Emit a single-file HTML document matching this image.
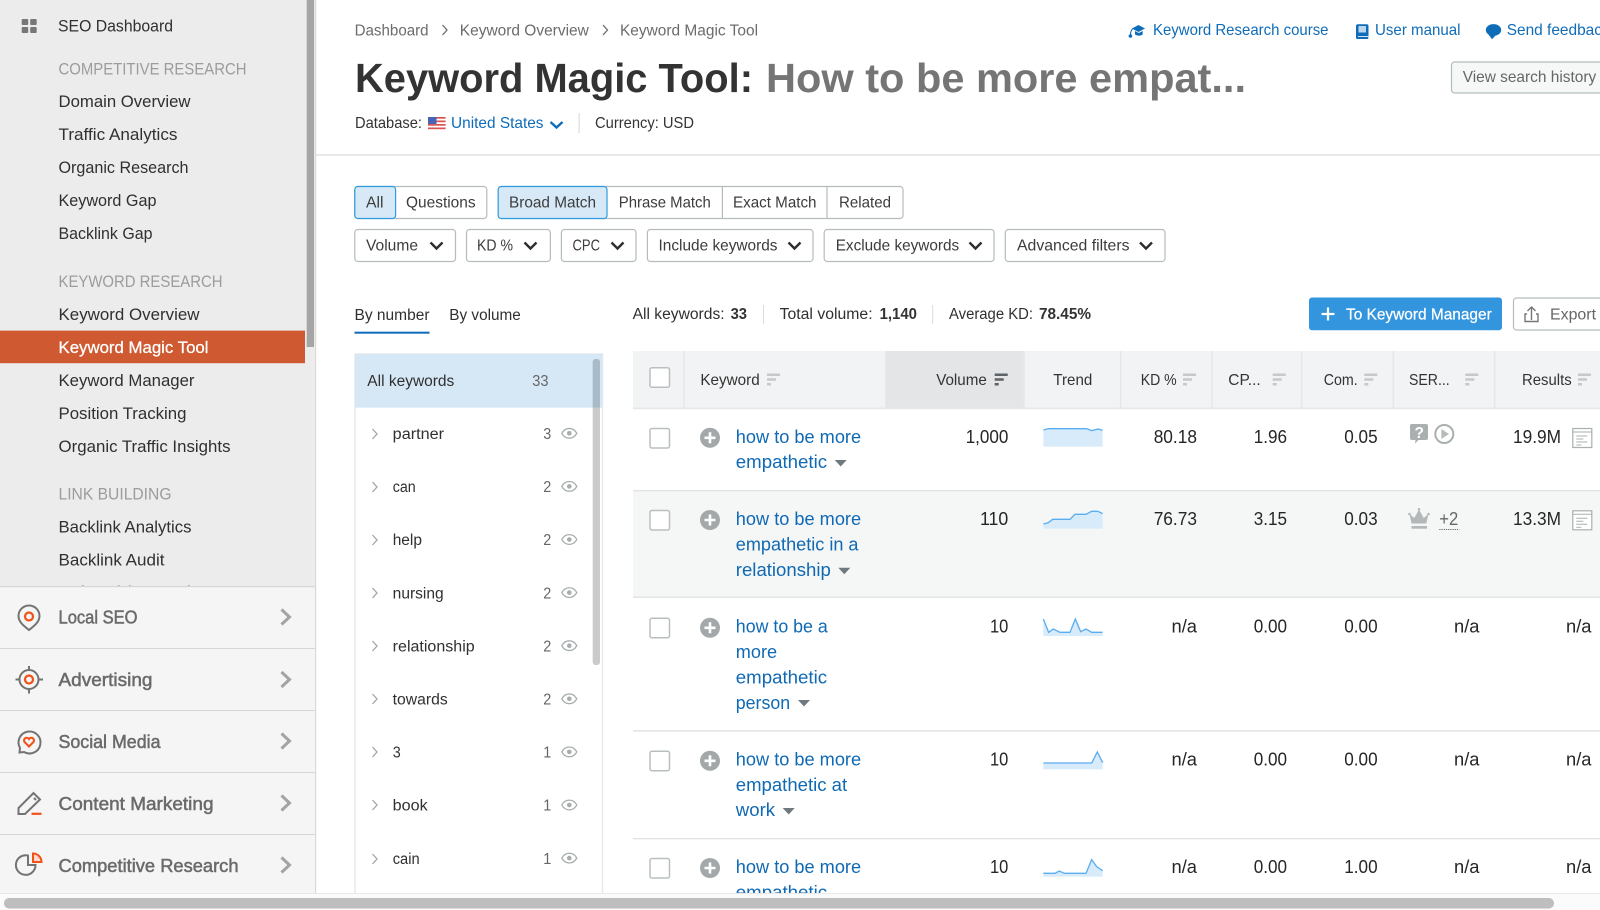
<!DOCTYPE html>
<html lang="en">
<head>
<meta charset="utf-8">
<title>Keyword Magic Tool</title>
<style>
html,body{margin:0;padding:0;background:#fff;width:1600px;height:910px;overflow:hidden}
svg{display:block;position:absolute;left:0;top:0}
text{font-family:"Liberation Sans",sans-serif;fill:#333;white-space:pre}
.n{font-size:16.5px;fill:#303030}
.h{font-size:16.5px;fill:#9c9c9c}
.m{font-size:18px;fill:#6a6a6a;stroke:#6a6a6a;stroke-width:.5px}
.b{font-size:15.5px;fill:#6c6c6c}
.f{font-size:16px;fill:#3c3c3c}
.l{font-size:16px;fill:#0f6cb8}
.k{font-size:18px;fill:#0f69b4}
.v{font-size:18px;fill:#262626}
.th{font-size:16px;fill:#333}
.g{font-size:15.5px;fill:#303030}
.c{font-size:15.5px;fill:#666}
.sb{font-size:15.5px;font-weight:bold;fill:#333}
.box{fill:#fff;stroke:#b4bcbc;stroke-width:1.2}
.cb{fill:#fff;stroke:#b9bfbf;stroke-width:1.5}
.chev{fill:none;stroke:#2e2e2e;stroke-width:2.4}
.side{fill:none;stroke:#a3a3a3;stroke-width:3}
.ic{fill:none;stroke:#737373;stroke-width:2}
.o{fill:none;stroke:#f0521a;stroke-width:2.2}
.sp{fill:#d8ebfb}
.sl{fill:none;stroke:#5aaef0;stroke-width:4}
</style>
</head>
<body>
<svg width="1600" height="910" viewBox="0 0 1600 910" xmlns="http://www.w3.org/2000/svg">
<rect width="1600" height="910" fill="#fff"/>

<!-- Sidebar -->
<rect x="0" y="0" width="315" height="587" fill="#ececec"/>
<rect x="306.700" y="0" width="7.300" height="347" fill="#a5a5a5"/>
<rect x="315" y="0" width="1.200" height="893" fill="#d9d9d9"/>
<g fill="#777">
<rect x="21.700" y="19" width="6.500" height="6" rx="1"/><rect x="30.200" y="19" width="6.500" height="6" rx="1"/>
<rect x="21.700" y="27" width="6.500" height="6" rx="1"/><rect x="30.200" y="27" width="6.500" height="6" rx="1"/>
</g>
<text class="n" x="58" y="31.300" textLength="115" lengthAdjust="spacingAndGlyphs">SEO Dashboard</text>
<text class="h" x="58.500" y="74.500" textLength="188" lengthAdjust="spacingAndGlyphs">COMPETITIVE RESEARCH</text>
<text class="n" x="58.500" y="107" textLength="132" lengthAdjust="spacingAndGlyphs">Domain Overview</text>
<text class="n" x="58.500" y="140" textLength="119" lengthAdjust="spacingAndGlyphs">Traffic Analytics</text>
<text class="n" x="58.500" y="173" textLength="130" lengthAdjust="spacingAndGlyphs">Organic Research</text>
<text class="n" x="58.500" y="206" textLength="98" lengthAdjust="spacingAndGlyphs">Keyword Gap</text>
<text class="n" x="58.500" y="239" textLength="94" lengthAdjust="spacingAndGlyphs">Backlink Gap</text>
<text class="h" x="58.500" y="287" textLength="164" lengthAdjust="spacingAndGlyphs">KEYWORD RESEARCH</text>
<text class="n" x="58.500" y="320" textLength="141" lengthAdjust="spacingAndGlyphs">Keyword Overview</text>
<rect x="0" y="330.600" width="305" height="32.600" fill="#cf5a32"/>
<text class="n" x="58.500" y="353" textLength="150" lengthAdjust="spacingAndGlyphs" style="fill:#fff;stroke:#fff;stroke-width:.25px">Keyword Magic Tool</text>
<text class="n" x="58.500" y="386" textLength="136" lengthAdjust="spacingAndGlyphs">Keyword Manager</text>
<text class="n" x="58.500" y="419" textLength="128" lengthAdjust="spacingAndGlyphs">Position Tracking</text>
<text class="n" x="58.500" y="452" textLength="172" lengthAdjust="spacingAndGlyphs">Organic Traffic Insights</text>
<text class="h" x="58.500" y="499.600" textLength="113" lengthAdjust="spacingAndGlyphs">LINK BUILDING</text>
<text class="n" x="58.500" y="532.500" textLength="133" lengthAdjust="spacingAndGlyphs">Backlink Analytics</text>
<text class="n" x="58.500" y="565.400" textLength="106" lengthAdjust="spacingAndGlyphs">Backlink Audit</text>
<g fill="#aaa"><rect x="82" y="585" width="1.500" height="1"/><rect x="118" y="585" width="1.500" height="1"/><rect x="129" y="585" width="1.500" height="1"/><rect x="188" y="585" width="1.500" height="1"/></g>

<!-- Sidebar bottom sections -->
<rect x="0" y="586" width="315" height="307" fill="#f5f5f5"/>
<g fill="#d3d7d7">
<rect x="0" y="586" width="315" height="1.200"/><rect x="0" y="648" width="315" height="1"/><rect x="0" y="710" width="315" height="1"/><rect x="0" y="772" width="315" height="1"/><rect x="0" y="834" width="315" height="1"/>
</g>
<text class="m" x="58.500" y="623.400" textLength="79" lengthAdjust="spacingAndGlyphs">Local SEO</text>
<text class="m" x="58.500" y="686" textLength="94" lengthAdjust="spacingAndGlyphs">Advertising</text>
<text class="m" x="58.500" y="748" textLength="102" lengthAdjust="spacingAndGlyphs">Social Media</text>
<text class="m" x="58.500" y="810" textLength="155" lengthAdjust="spacingAndGlyphs">Content Marketing</text>
<text class="m" x="58.500" y="872" textLength="180" lengthAdjust="spacingAndGlyphs">Competitive Research</text>
<path class="side" d="M281.500 609.500l8 7.500-8 7.500M281.500 672l8 7.500-8 7.500M281.500 733.500l8 7.500-8 7.500M281.500 795.500l8 7.500-8 7.500M281.500 857.500l8 7.500-8 7.500"/>
<!-- icons -->
<path class="ic" d="M29 630c-5-4-10.500-8-10.500-14a10.500 10.500 0 0 1 21 0c0 6-5.500 10-10.500 14z"/>
<circle class="o" cx="29" cy="616.500" r="4"/>
<circle class="ic" cx="29" cy="679.500" r="9.500"/><path class="ic" d="M29 666v4.500M29 689v4.500M15.500 679.500h4.500M38.500 679.500h4.500"/>
<circle class="o" cx="29" cy="679.500" r="4"/>
<path class="ic" d="M19.500 752.500l.5-4.500a11 11 0 1 1 4 4z"/>
<path d="M29 746.500l-4.500-4.500a2.700 2.700 0 0 1 4.500-3 2.700 2.700 0 0 1 4.500 3z" fill="none" stroke="#f0521a" stroke-width="2.100"/>
<path class="ic" d="M18.500 814v-6l15-15 6.500 6.500-15 14.500z"/><path class="ic" stroke-width="1.200" d="M34 798l2 2"/>
<rect x="31.500" y="812.700" width="10" height="2.200" fill="#f0521a"/>
<path class="ic" d="M30 855.500a9.800 9.800 0 1 0 7.500 9.500h-7.500z" transform="translate(-2 0)"/>
<path d="M33 854v-.500a8.500 8.500 0 0 1 8.500 8.500h-8.500z" fill="#fbd9cb" stroke="#f0521a" stroke-width="2"/>

<!-- Breadcrumb -->
<text class="b" x="354.600" y="35.500" textLength="74" lengthAdjust="spacingAndGlyphs">Dashboard</text>
<path d="M442.500 25l4.500 5-4.500 5" fill="none" stroke="#6c6c6c" stroke-width="1.300"/>
<text class="b" x="459.800" y="35.500" textLength="129" lengthAdjust="spacingAndGlyphs">Keyword Overview</text>
<path d="M603 25l4.500 5-4.500 5" fill="none" stroke="#6c6c6c" stroke-width="1.300"/>
<text class="b" x="620" y="35.500" textLength="138" lengthAdjust="spacingAndGlyphs">Keyword Magic Tool</text>

<!-- Title -->
<text x="355" y="92" textLength="398" lengthAdjust="spacingAndGlyphs" style="font-size:41px;font-weight:bold;fill:#333">Keyword Magic Tool:</text>
<text x="766" y="92" textLength="480" lengthAdjust="spacingAndGlyphs" style="font-size:41px;font-weight:bold;fill:#757575">How to be more empat...</text>

<!-- Database -->
<text class="f" x="355" y="128" textLength="67" lengthAdjust="spacingAndGlyphs" style="fill:#333">Database:</text>
<rect x="428" y="117" width="17.600" height="13" fill="#fff"/>
<g fill="#d9534f"><rect x="428" y="117" width="17.600" height="1.700"/><rect x="428" y="120.500" width="17.600" height="1.700"/><rect x="428" y="124" width="17.600" height="1.700"/><rect x="428" y="127.500" width="17.600" height="1.700"/></g>
<rect x="428" y="117" width="8.500" height="7" fill="#4a63b5"/>
<text class="l" x="451" y="128" textLength="92.500" lengthAdjust="spacingAndGlyphs">United States</text>
<path d="M550.500 122l6 5.500 6-5.500" fill="none" stroke="#0f6cb8" stroke-width="2.400"/>
<rect x="578.500" y="113" width="1.200" height="20" fill="#dcdcdc"/>
<text class="f" x="595" y="128" textLength="99" lengthAdjust="spacingAndGlyphs" style="fill:#333">Currency: USD</text>

<!-- Top links -->
<path d="M1132 28.500l6.500-3.500 6.500 3.500-6.500 3.500z" fill="#0f6cb8"/>
<path d="M1135 31v3.500c2.500 1.600 5.500 1.600 7.700 0v-3.500l-3.900 2z" fill="#0f6cb8"/>
<path d="M1133 28.500c-1.800 1.500-2.500 3.500-2.600 6.500" stroke="#0f6cb8" stroke-width="1.100" fill="none"/><circle cx="1130.400" cy="36" r="1.800" fill="#0f6cb8"/>
<text class="l" x="1153" y="35" textLength="175.500" lengthAdjust="spacingAndGlyphs">Keyword Research course</text>
<rect x="1356" y="24.300" width="12.500" height="14.700" rx="1.800" fill="#0f6cb8"/>
<rect x="1358.500" y="26" width="7.500" height="6.500" fill="#bcd6ec"/>
<rect x="1358" y="36" width="10.500" height="1" fill="#cfe2f3"/>
<text class="l" x="1375" y="35" textLength="85.500" lengthAdjust="spacingAndGlyphs">User manual</text>
<ellipse cx="1493.500" cy="30" rx="7.700" ry="5.900" fill="#0f6cb8"/>
<path d="M1488.500 34.500l3.500 4.800 4-4.300z" fill="#0f6cb8"/>
<text class="l" x="1506.700" y="35" textLength="103" lengthAdjust="spacingAndGlyphs">Send feedback</text>

<!-- View search history -->
<rect x="1451.500" y="62" width="170" height="31" rx="3" fill="#f6f7f7" stroke="#b4bcbc" stroke-width="1.200"/>
<text class="f" x="1462.700" y="82.200" textLength="133.500" lengthAdjust="spacingAndGlyphs" style="fill:#666">View search history</text>

<rect x="316" y="154.300" width="1284" height="1.500" fill="#e0e2e2"/>

<!-- Filter row 1 -->
<rect class="box" x="354.800" y="186.500" width="132" height="32" rx="3"/>
<rect x="354.800" y="186.500" width="40.800" height="32" rx="3" fill="#d7e9f7" stroke="#2e9be0" stroke-width="1.200"/>
<text class="f" x="366" y="207.700" textLength="17.500" lengthAdjust="spacingAndGlyphs">All</text>
<text class="f" x="406" y="207.700" textLength="69.600" lengthAdjust="spacingAndGlyphs">Questions</text>
<rect class="box" x="498.200" y="186.500" width="404.800" height="32" rx="3"/>
<rect x="498.200" y="186.500" width="108.800" height="32" rx="3" fill="#d7e9f7" stroke="#2e9be0" stroke-width="1.200"/>
<path d="M722.400 186.500v32M827 186.500v32" stroke="#b4bcbc" stroke-width="1.200"/>
<text class="f" x="509" y="207.700" textLength="87" lengthAdjust="spacingAndGlyphs">Broad Match</text>
<text class="f" x="618.800" y="207.700" textLength="92" lengthAdjust="spacingAndGlyphs">Phrase Match</text>
<text class="f" x="733" y="207.700" textLength="83.500" lengthAdjust="spacingAndGlyphs">Exact Match</text>
<text class="f" x="839" y="207.700" textLength="52" lengthAdjust="spacingAndGlyphs">Related</text>

<!-- Filter row 2 -->
<rect class="box" x="354.800" y="229.500" width="100.700" height="32" rx="3"/>
<text class="f" x="366" y="250.700" textLength="52" lengthAdjust="spacingAndGlyphs">Volume</text>
<path class="chev" d="M430.500 242.500l6 6 6-6"/>
<rect class="box" x="466.500" y="229.500" width="83.900" height="32" rx="3"/>
<text class="f" x="477" y="250.700" textLength="36" lengthAdjust="spacingAndGlyphs">KD %</text>
<path class="chev" d="M524.500 242.500l6 6 6-6"/>
<rect class="box" x="561.400" y="229.500" width="74.600" height="32" rx="3"/>
<text class="f" x="572.500" y="250.700" textLength="27.500" lengthAdjust="spacingAndGlyphs">CPC</text>
<path class="chev" d="M611.500 242.500l6 6 6-6"/>
<rect class="box" x="647.400" y="229.500" width="165.600" height="32" rx="3"/>
<text class="f" x="658.500" y="250.700" textLength="119" lengthAdjust="spacingAndGlyphs">Include keywords</text>
<path class="chev" d="M788.500 242.500l6 6 6-6"/>
<rect class="box" x="824.200" y="229.500" width="169.800" height="32" rx="3"/>
<text class="f" x="835.700" y="250.700" textLength="123.500" lengthAdjust="spacingAndGlyphs">Exclude keywords</text>
<path class="chev" d="M969.500 242.500l6 6 6-6"/>
<rect class="box" x="1005.300" y="229.500" width="159.700" height="32" rx="3"/>
<text class="f" x="1017" y="250.700" textLength="112.500" lengthAdjust="spacingAndGlyphs">Advanced filters</text>
<path class="chev" d="M1140 242.500l6 6 6-6"/>

<!-- By number / stats -->
<text class="g" x="354.500" y="320" textLength="75" lengthAdjust="spacingAndGlyphs">By number</text>
<rect x="354.500" y="331.700" width="75" height="2" fill="#0f6cb8"/>
<text class="g" x="449.300" y="320" textLength="71.500" lengthAdjust="spacingAndGlyphs">By volume</text>
<text class="g" x="632.600" y="319" textLength="92" lengthAdjust="spacingAndGlyphs">All keywords:</text>
<text class="sb" x="730.600" y="319" textLength="16.400" lengthAdjust="spacingAndGlyphs">33</text>
<rect x="763" y="305" width="1" height="19" fill="#dcdcdc"/>
<text class="g" x="779.600" y="319" textLength="93" lengthAdjust="spacingAndGlyphs">Total volume:</text>
<text class="sb" x="879.600" y="319" textLength="37.400" lengthAdjust="spacingAndGlyphs">1,140</text>
<rect x="932.200" y="305" width="1" height="19" fill="#dcdcdc"/>
<text class="g" x="949" y="319" textLength="84" lengthAdjust="spacingAndGlyphs">Average KD:</text>
<text class="sb" x="1039" y="319" textLength="52" lengthAdjust="spacingAndGlyphs">78.45%</text>

<rect x="1309" y="297.500" width="193" height="32.700" rx="3" fill="#3395de"/>
<path d="M1321.500 314h13M1328 307.500v13" stroke="#fff" stroke-width="2.200"/>
<text x="1346" y="319.500" textLength="145.700" lengthAdjust="spacingAndGlyphs" style="font-size:16px;fill:#fff;stroke:#fff;stroke-width:.25px">To Keyword Manager</text>
<rect x="1513.500" y="298" width="120" height="32" rx="3" fill="#fff" stroke="#b4bcbc" stroke-width="1.200"/>
<path d="M1531.500 320v-12.500M1527.500 311l4-4 4 4M1527 314h-2v7.500h13v-7.500h-2" fill="none" stroke="#777" stroke-width="1.400"/>
<text class="f" x="1550" y="319.500" textLength="46" lengthAdjust="spacingAndGlyphs" style="fill:#666">Export</text>

<!-- Left keyword panel -->
<rect x="355" y="354" width="247.500" height="545" fill="#fff" stroke="#e9e9e9" stroke-width="1.500"/>
<rect x="355" y="354" width="247.500" height="53.700" fill="#d6e8f6"/>
<rect x="592.700" y="359" width="7.300" height="306" rx="3" fill="#cacaca"/>
<path d="M592.700 407.500v-45.500a3 3 0 0 1 3-3h1.300a3 3 0 0 1 3 3v45.500z" fill="#a9bbc8"/>
<text class="g" x="367.300" y="386" textLength="87" lengthAdjust="spacingAndGlyphs">All keywords</text>
<text class="c" x="532.200" y="386" textLength="16.300" lengthAdjust="spacingAndGlyphs">33</text>

<defs>
<g id="eye"><path d="M-7.500 0c3.500-6.500 11.500-6.500 15 0c-3.500 6.500-11.500 6.500-15 0z" fill="none" stroke="#a6adad" stroke-width="1.300"/><circle r="2.300" fill="#a6adad"/></g>
<path id="rc" d="M0-5l4.500 5-4.500 5" fill="none" stroke="#a0a6a6" stroke-width="1.300"/>
</defs>
<use href="#rc" x="372.500" y="434"/><use href="#eye" x="569.300" y="433.300"/>
<use href="#rc" x="372.500" y="487"/><use href="#eye" x="569.300" y="486.400"/>
<use href="#rc" x="372.500" y="540"/><use href="#eye" x="569.300" y="539.500"/>
<use href="#rc" x="372.500" y="593"/><use href="#eye" x="569.300" y="592.600"/>
<use href="#rc" x="372.500" y="646"/><use href="#eye" x="569.300" y="645.700"/>
<use href="#rc" x="372.500" y="699"/><use href="#eye" x="569.300" y="698.800"/>
<use href="#rc" x="372.500" y="752"/><use href="#eye" x="569.300" y="751.900"/>
<use href="#rc" x="372.500" y="805"/><use href="#eye" x="569.300" y="805"/>
<use href="#rc" x="372.500" y="859"/><use href="#eye" x="569.300" y="858.100"/>
<text class="g" x="392.700" y="439.200" textLength="51.300" lengthAdjust="spacingAndGlyphs">partner</text>
<text class="c" x="543.300" y="439.200" textLength="8" lengthAdjust="spacingAndGlyphs">3</text>
<text class="g" x="392.700" y="491.900" textLength="23" lengthAdjust="spacingAndGlyphs">can</text>
<text class="c" x="543.300" y="491.900" textLength="8" lengthAdjust="spacingAndGlyphs">2</text>
<text class="g" x="392.700" y="545" textLength="29.300" lengthAdjust="spacingAndGlyphs">help</text>
<text class="c" x="543.300" y="545" textLength="8" lengthAdjust="spacingAndGlyphs">2</text>
<text class="g" x="392.700" y="598.300" textLength="51" lengthAdjust="spacingAndGlyphs">nursing</text>
<text class="c" x="543.300" y="598.300" textLength="8" lengthAdjust="spacingAndGlyphs">2</text>
<text class="g" x="392.700" y="651.500" textLength="82" lengthAdjust="spacingAndGlyphs">relationship</text>
<text class="c" x="543.300" y="651.500" textLength="8" lengthAdjust="spacingAndGlyphs">2</text>
<text class="g" x="392.700" y="704.600" textLength="55" lengthAdjust="spacingAndGlyphs">towards</text>
<text class="c" x="543.300" y="704.600" textLength="8" lengthAdjust="spacingAndGlyphs">2</text>
<text class="g" x="392.700" y="757.300" textLength="8" lengthAdjust="spacingAndGlyphs">3</text>
<text class="c" x="543.300" y="757.300" textLength="8" lengthAdjust="spacingAndGlyphs">1</text>
<text class="g" x="392.700" y="810.400" textLength="35" lengthAdjust="spacingAndGlyphs">book</text>
<text class="c" x="543.300" y="810.400" textLength="8" lengthAdjust="spacingAndGlyphs">1</text>
<text class="g" x="392.700" y="864" textLength="27" lengthAdjust="spacingAndGlyphs">cain</text>
<text class="c" x="543.300" y="864" textLength="8" lengthAdjust="spacingAndGlyphs">1</text>

<!-- Table header -->
<rect x="633" y="351" width="967" height="57" fill="#f2f3f4"/>
<rect x="885.300" y="351" width="138.700" height="57" fill="#e3e5e6"/>
<rect x="633" y="407.500" width="967" height="1.800" fill="#e6e8e8"/>
<path d="M684 351v57M1120.700 351v57M1212 351v57M1301.700 351v57M1393.300 351v57M1494.700 351v57M1024 351v57" stroke="#e6e8e8" stroke-width="1.500"/>
<rect class="cb" x="650" y="367.700" width="19.500" height="19.500" rx="2"/>
<text class="th" x="700.400" y="385" textLength="59.300" lengthAdjust="spacingAndGlyphs">Keyword</text>
<text class="th" x="936.200" y="385" textLength="50.600" lengthAdjust="spacingAndGlyphs">Volume</text>
<text class="th" x="1053.300" y="385" textLength="39" lengthAdjust="spacingAndGlyphs">Trend</text>
<text class="th" x="1140.700" y="385" textLength="36" lengthAdjust="spacingAndGlyphs">KD %</text>
<text class="th" x="1228.300" y="385" textLength="32.400" lengthAdjust="spacingAndGlyphs">CP...</text>
<text class="th" x="1323.700" y="385" textLength="34" lengthAdjust="spacingAndGlyphs">Com.</text>
<text class="th" x="1409" y="385" textLength="40.700" lengthAdjust="spacingAndGlyphs">SER...</text>
<text class="th" x="1522" y="385" textLength="49.700" lengthAdjust="spacingAndGlyphs">Results</text>
<defs>
<path id="st" d="M0 0h13v2.500h-13zM0 4.800h9v2.500h-9zM0 9.500h4v2.500h-4z"/>
</defs>
<use href="#st" x="767" y="373.500" fill="#c6c9cb"/>
<use href="#st" x="994.700" y="373.500" fill="#5c6265"/>
<use href="#st" x="1183" y="373.500" fill="#c6c9cb"/>
<use href="#st" x="1272.700" y="373.500" fill="#c6c9cb"/>
<use href="#st" x="1364.300" y="373.500" fill="#c6c9cb"/>
<use href="#st" x="1465.300" y="373.500" fill="#c6c9cb"/>
<use href="#st" x="1578" y="373.500" fill="#c6c9cb"/>

<!-- Row backgrounds -->
<rect x="633" y="491" width="967" height="106" fill="#f5f6f6"/>
<rect x="633" y="490" width="967" height="1.300" fill="#e1e4e4"/>
<rect x="633" y="596.300" width="967" height="1.800" fill="#e6e8e8"/>
<rect x="633" y="730" width="967" height="1.800" fill="#e6e8e8"/>
<rect x="633" y="838" width="967" height="1.300" fill="#dfe3e3"/>

<defs>
<g id="plus"><circle r="10" fill="#a3a9aa"/><path d="M-5.500 0h11M0-5.500v11" stroke="#fff" stroke-width="2.600"/></g>
<path id="caret" d="M0 0h12l-6 6.500z" fill="#6f7a7e"/>
<g id="doc"><rect x=".5" y=".5" width="19" height="19" fill="#fff" stroke="#a8afaf" stroke-width="1.200"/><path d="M.5 4h19M4 8h11M4 11h7M4 14h11M4 17h5" stroke="#a8afaf" stroke-width="1"/></g>
</defs>

<!-- Row 1 -->
<rect class="cb" x="650" y="428.500" width="19.500" height="19.500" rx="2"/>
<use href="#plus" x="710" y="437.800"/>
<text class="k" x="735.800" y="443" textLength="125.300" lengthAdjust="spacingAndGlyphs">how to be more</text>
<text class="k" x="735.800" y="468.200" textLength="91.300" lengthAdjust="spacingAndGlyphs">empathetic</text>
<use href="#caret" x="834.700" y="460"/>
<text class="v" x="965.700" y="443" textLength="42.700" lengthAdjust="spacingAndGlyphs">1,000</text>
<text class="v" x="1153.700" y="443" textLength="43.300" lengthAdjust="spacingAndGlyphs">80.18</text>
<text class="v" x="1253.700" y="443" textLength="33.300" lengthAdjust="spacingAndGlyphs">1.96</text>
<text class="v" x="1344.300" y="443" textLength="33.300" lengthAdjust="spacingAndGlyphs">0.05</text>
<text class="v" x="1513" y="443" textLength="48" lengthAdjust="spacingAndGlyphs">19.9M</text>
<use href="#doc" x="1572.300" y="428"/>
<path d="M1412 424h14a2 2 0 0 1 2 2v12a2 2 0 0 1-2 2h-7.500l-3.500 3.500.5-3.500h-3.500a2 2 0 0 1-2-2v-12a2 2 0 0 1 2-2z" fill="#aab0b0"/>
<text x="1414.500" y="437.800" style="font-size:15.500px;font-weight:bold;fill:#fff">?</text>
<circle cx="1444.300" cy="434" r="9" fill="none" stroke="#aab0b0" stroke-width="2"/>
<path d="M1441.300 429l7.700 5-7.700 5z" fill="#b6bcbc"/>

<!-- Row 2 -->
<rect class="cb" x="650" y="510.500" width="19.500" height="19.500" rx="2"/>
<use href="#plus" x="710" y="520"/>
<text class="k" x="735.800" y="525" textLength="125.300" lengthAdjust="spacingAndGlyphs">how to be more</text>
<text class="k" x="735.800" y="550.300" textLength="122.700" lengthAdjust="spacingAndGlyphs">empathetic in a</text>
<text class="k" x="735.800" y="576" textLength="95" lengthAdjust="spacingAndGlyphs">relationship</text>
<use href="#caret" x="838.300" y="567.800"/>
<text class="v" x="980" y="525" textLength="28.300" lengthAdjust="spacingAndGlyphs">110</text>
<text class="v" x="1153.700" y="525" textLength="43.300" lengthAdjust="spacingAndGlyphs">76.73</text>
<text class="v" x="1253.700" y="525" textLength="33.300" lengthAdjust="spacingAndGlyphs">3.15</text>
<text class="v" x="1344.300" y="525" textLength="33.300" lengthAdjust="spacingAndGlyphs">0.03</text>
<text class="v" x="1513" y="525" textLength="48" lengthAdjust="spacingAndGlyphs">13.3M</text>
<use href="#doc" x="1572.300" y="510.300"/>
<path d="M1409.500 514l4.800 4 4.700-8.500 4.700 8.500 4.800-4-2.200 9.500h-14.800z" fill="#b3b9b9"/>
<circle cx="1409.500" cy="514" r="1.300" fill="#b3b9b9"/><circle cx="1419" cy="509.300" r="1.300" fill="#b3b9b9"/><circle cx="1428.500" cy="514" r="1.300" fill="#b3b9b9"/>
<rect x="1411.500" y="526" width="15.500" height="2.700" fill="#b3b9b9"/>
<text x="1439.300" y="525" textLength="19" lengthAdjust="spacingAndGlyphs" style="font-size:18px;fill:#666">+2</text>
<path d="M1439.300 529.500h20" stroke="#666" stroke-width="1" stroke-dasharray="1.200 1"/>

<!-- Row 3 -->
<rect class="cb" x="650" y="618.300" width="19.500" height="19.500" rx="2"/>
<use href="#plus" x="710" y="627.800"/>
<text class="k" x="735.800" y="632.700" textLength="92" lengthAdjust="spacingAndGlyphs">how to be a</text>
<text class="k" x="735.800" y="658" textLength="41.300" lengthAdjust="spacingAndGlyphs">more</text>
<text class="k" x="735.800" y="683.500" textLength="91.300" lengthAdjust="spacingAndGlyphs">empathetic</text>
<text class="k" x="735.800" y="709" textLength="54.300" lengthAdjust="spacingAndGlyphs">person</text>
<use href="#caret" x="798" y="700"/>
<text class="v" x="990" y="632.700" textLength="18.300" lengthAdjust="spacingAndGlyphs">10</text>
<text class="v" x="1171.500" y="632.700" textLength="25.500" lengthAdjust="spacingAndGlyphs">n/a</text>
<text class="v" x="1253.700" y="632.700" textLength="33.300" lengthAdjust="spacingAndGlyphs">0.00</text>
<text class="v" x="1344.300" y="632.700" textLength="33.300" lengthAdjust="spacingAndGlyphs">0.00</text>
<text class="v" x="1454" y="632.700" textLength="25.500" lengthAdjust="spacingAndGlyphs">n/a</text>
<text class="v" x="1566" y="632.700" textLength="25.500" lengthAdjust="spacingAndGlyphs">n/a</text>

<!-- Row 4 -->
<rect class="cb" x="650" y="751.200" width="19.500" height="19.500" rx="2"/>
<use href="#plus" x="710" y="760.800"/>
<text class="k" x="735.800" y="765.700" textLength="125.300" lengthAdjust="spacingAndGlyphs">how to be more</text>
<text class="k" x="735.800" y="791" textLength="111.300" lengthAdjust="spacingAndGlyphs">empathetic at</text>
<text class="k" x="735.800" y="816" textLength="39.300" lengthAdjust="spacingAndGlyphs">work</text>
<use href="#caret" x="782.700" y="808"/>
<text class="v" x="990" y="765.700" textLength="18.300" lengthAdjust="spacingAndGlyphs">10</text>
<text class="v" x="1171.500" y="765.700" textLength="25.500" lengthAdjust="spacingAndGlyphs">n/a</text>
<text class="v" x="1253.700" y="765.700" textLength="33.300" lengthAdjust="spacingAndGlyphs">0.00</text>
<text class="v" x="1344.300" y="765.700" textLength="33.300" lengthAdjust="spacingAndGlyphs">0.00</text>
<text class="v" x="1454" y="765.700" textLength="25.500" lengthAdjust="spacingAndGlyphs">n/a</text>
<text class="v" x="1566" y="765.700" textLength="25.500" lengthAdjust="spacingAndGlyphs">n/a</text>

<!-- Row 5 -->
<rect class="cb" x="650" y="858.500" width="19.500" height="19.500" rx="2"/>
<use href="#plus" x="710" y="868"/>
<text class="k" x="735.800" y="873" textLength="125.300" lengthAdjust="spacingAndGlyphs">how to be more</text>
<text class="k" x="735.800" y="898.500" textLength="91.300" lengthAdjust="spacingAndGlyphs">empathetic</text>
<text class="v" x="990" y="873" textLength="18.300" lengthAdjust="spacingAndGlyphs">10</text>
<text class="v" x="1171.500" y="873" textLength="25.500" lengthAdjust="spacingAndGlyphs">n/a</text>
<text class="v" x="1253.700" y="873" textLength="33.300" lengthAdjust="spacingAndGlyphs">0.00</text>
<text class="v" x="1344.300" y="873" textLength="33.300" lengthAdjust="spacingAndGlyphs">1.00</text>
<text class="v" x="1454" y="873" textLength="25.500" lengthAdjust="spacingAndGlyphs">n/a</text>
<text class="v" x="1566" y="873" textLength="25.500" lengthAdjust="spacingAndGlyphs">n/a</text>

<!-- Sparklines -->
<g transform="translate(630 340) scale(.33333)">
<path class="sp" d="M1240 270L1255 266H1370L1385 272L1405 267L1418 271V320H1240Z"/>
<path class="sl" d="M1240 270L1255 266H1370L1385 272L1405 267L1418 271"/>
<path class="sp" d="M1240 552L1255 548L1268 538H1320L1335 523H1368L1385 514H1403L1418 521V566H1240Z"/>
<path class="sl" d="M1240 552L1255 548L1268 538H1320L1335 523H1368L1385 514H1403L1418 521"/>
</g>
<g transform="translate(630 600) scale(.33333)">
<path class="sp" d="M1240 57L1256 97L1270 87L1290 97H1320L1336 57L1352 95L1368 87L1385 97H1418V108H1240Z"/>
<path class="sl" d="M1240 57L1256 97L1270 87L1290 97H1320L1336 57L1352 95L1368 87L1385 97H1418"/>
<path class="sp" d="M1240 489H1385L1402 456L1418 488V508H1240Z"/>
<path class="sl" d="M1240 489H1385L1402 456L1418 488"/>
<path class="sp" d="M1240 820H1275L1288 813L1303 820H1368L1385 779L1400 800L1418 812V830H1240Z"/>
<path class="sl" d="M1240 820H1275L1288 813L1303 820H1368L1385 779L1400 800L1418 812"/>
</g>

<!-- Horizontal scrollbar -->
<rect x="0" y="893" width="1600" height="17" fill="#fbfbfb"/>
<rect x="0" y="893" width="1600" height="1" fill="#e9e9e9"/>
<rect x="4" y="898" width="1550" height="10.500" rx="5" fill="#bebebe"/>
</svg>
</body>
</html>
